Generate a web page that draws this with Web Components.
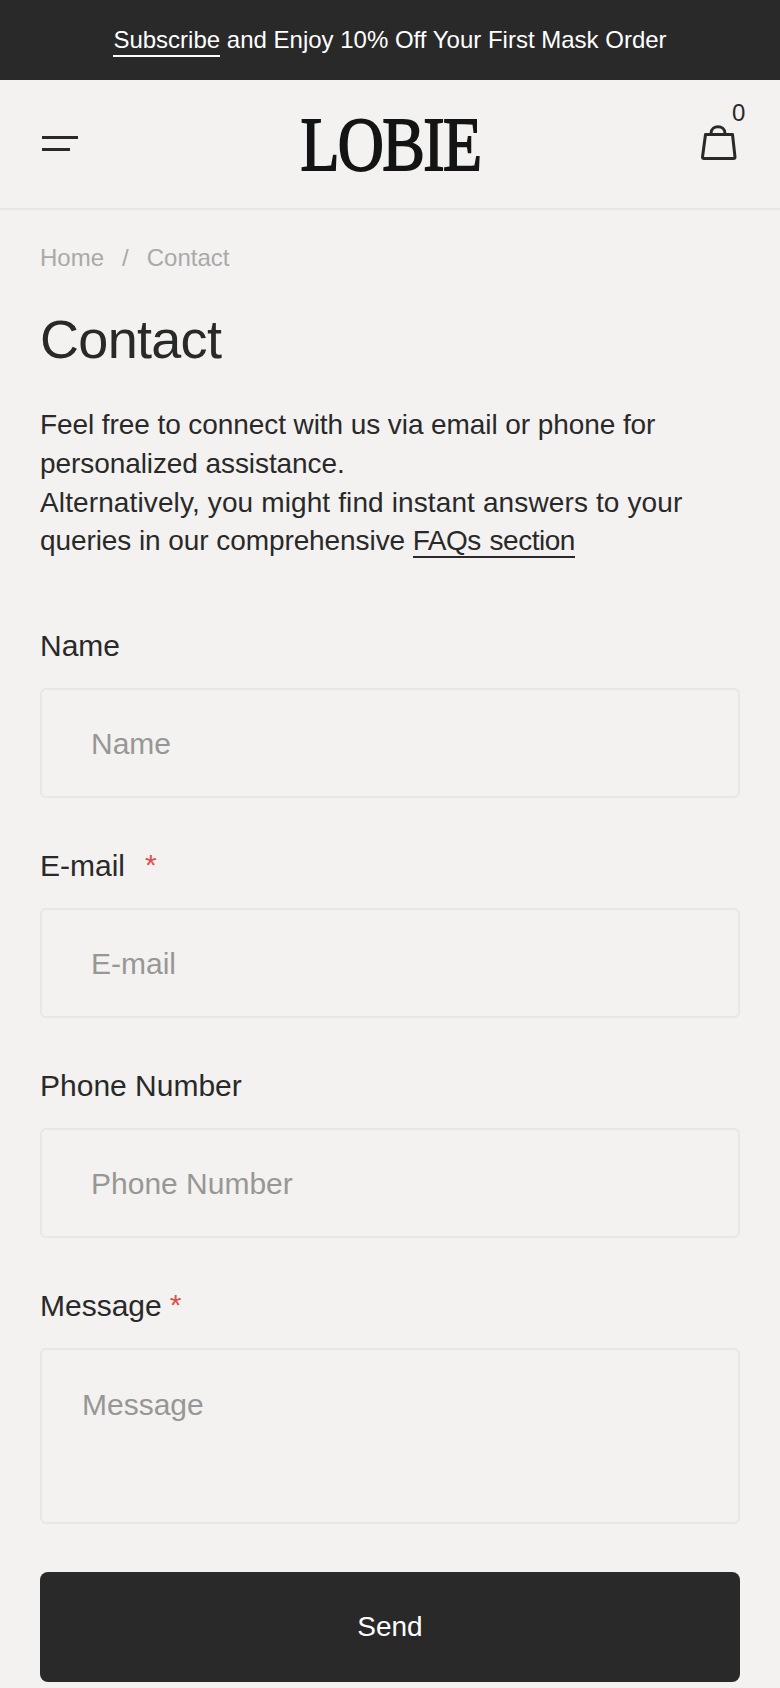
<!DOCTYPE html>
<html lang="en">
<head>
<meta charset="utf-8">
<title>Contact</title>
<style>
  html, body { margin: 0; background: #f3f2f0; }
  body { font-family: "Liberation Sans", Arial, sans-serif; color: #292929; }
</style>
</head>
<body>
<promo-bar><a href="#">Subscribe</a> and Enjoy 10% Off Your First Mask Order</promo-bar>
<site-header></site-header>
<contact-page>
  <bread-crumbs></bread-crumbs>
</contact-page>
<script>
class PromoBar extends HTMLElement {
  connectedCallback() {
    this.attachShadow({ mode: "open" }).innerHTML = `
      <style>
        :host { display:flex; height:80px; align-items:center; justify-content:center; background:#292929; color:#fff; font-size:24px; white-space:pre; padding-bottom:1px; box-sizing:border-box; }
        ::slotted(a) { color:#fff; text-decoration:none; border-bottom:2px solid #fff; padding-bottom:2px; }
      </style>
      <div><slot></slot></div>`
  }
}
customElements.define("promo-bar", PromoBar)

class SiteHeader extends HTMLElement {
  connectedCallback() {
    this.attachShadow({ mode: "open" }).innerHTML = `
      <style>
        :host { display:flex; height:130px; box-sizing:border-box; align-items:center; justify-content:space-between; padding:0 40px 0 42px; border-bottom:2px solid #e8e7e5; }
        .menu { display:flex; flex-direction:column; gap:9px; width:36px; margin-top:-2px; }
        .menu i { display:block; height:3px; background:#292929; }
        .menu i + i { width:28px; }
        .logo { font:400 77px/1 "Liberation Serif", serif; letter-spacing:-2px; color:#141414; -webkit-text-stroke:1.800px #141414; transform:scaleX(.83); margin:0 0 0 2px; }
        .bag { position:relative; width:40px; height:40px; margin-bottom:2px; }
        .bag svg { display:block; }
        .count { position:absolute; left:32px; top:-23px; font-size:24px; line-height:26px; }
      </style>
      <div class="menu"><i></i><i></i></div>
      <div class="logo">LOBIE</div>
      <div class="bag">
        <svg width="40" height="40" viewBox="0 0 40 40" fill="none" stroke="#292929" stroke-width="3" stroke-linejoin="round">
          <path d="M5.500 11.500H32.500L35 34Q35.200 35.500 33.500 35.500H4Q2.300 35.500 2.500 34Z"/>
          <path d="M11 11.500V10.500C11 1.500 25 1.500 25 10.500V11.500"/>
        </svg>
        <span class="count">0</span>
      </div>`
  }
}
customElements.define("site-header", SiteHeader)

class BreadCrumbs extends HTMLElement {
  connectedCallback() {
    this.attachShadow({ mode: "open" }).innerHTML = `
      <style>
        :host { display:flex; gap:18px; color:#a9a9a7; font-size:24px; line-height:28px; }
      </style>
      <span>Home</span><span>/</span><span>Contact</span>`
  }
}
customElements.define("bread-crumbs", BreadCrumbs)

class FormField extends HTMLElement {
  connectedCallback() {
    const label = this.getAttribute("label")
    const multi = this.hasAttribute("multiline")
    const star = this.getAttribute("star")
    this.attachShadow({ mode: "open" }).innerHTML = `
      <style>
        :host { display:block; margin-bottom:51px; }
        label { display:block; font-size:30px; line-height:34px; color:#292929; margin-bottom:25px; }
        b { font-weight:400; color:#d9534f; margin-left:${star === "wide" ? 20 : 8}px; font-size:30px; line-height:0; vertical-align:1px; }
        input, textarea { display:block; width:100%; box-sizing:border-box; margin:0; background:#f3f2f0; border:2px solid #e8e7e5; border-radius:6px; font:30px "Liberation Sans", Arial, sans-serif; color:#292929; outline:none; resize:none; }
        input { height:110px; padding:2px 49px 0; }
        textarea { height:176px; padding:38px 40px; }
        ::placeholder { color:#979795; opacity:1; }
      </style>
      <label>${label}${star ? "<b>*</b>" : ""}</label>
      ${multi ? `<textarea placeholder="${label}"></textarea>` : `<input placeholder="${label}">`}`
  }
}
customElements.define("form-field", FormField)

class SendButton extends HTMLElement {
  connectedCallback() {
    this.attachShadow({ mode: "open" }).innerHTML = `
      <style>
        :host { display:block; }
        button { display:block; width:100%; height:110px; border:0; border-radius:8px; background:#292929; color:#fff; font:28px "Liberation Sans", Arial, sans-serif; }
      </style>
      <button><slot></slot></button>`
  }
}
customElements.define("send-button", SendButton)

class ContactPage extends HTMLElement {
  connectedCallback() {
    this.attachShadow({ mode: "open" }).innerHTML = `
      <style>
        :host { display:block; padding:34px 40px 0; }
        h1 { margin:36px 0 36px; font-size:54px; line-height:62px; font-weight:400; color:#292929; letter-spacing:-.7px; }
        p { margin:0 0 69px; font-size:28px; letter-spacing:-.08px; line-height:38.500px; color:#292929; }
        p span { display:block; }
        p span + span { margin-top:1px; line-height:38px; }
        p em { font-style:normal; letter-spacing:.12px; }
        a { color:inherit; text-decoration:none; border-bottom:2px solid #292929; letter-spacing:-.5px; word-spacing:1.500px; }
        form-field[multiline] { margin-bottom:48px; }
      </style>
      <slot></slot>
      <h1>Contact</h1>
      <p><span>Feel free to connect with us via email or phone for personalized assistance.</span><span><em>Alternatively, you might find instant answers to your</em><br>queries in our comprehensive <a href="#">FAQs section</a></span></p>
      <form-field label="Name"></form-field>
      <form-field label="E-mail" star="wide"></form-field>
      <form-field label="Phone Number"></form-field>
      <form-field label="Message" star="near" multiline></form-field>
      <send-button>Send</send-button>`
  }
}
customElements.define("contact-page", ContactPage)
</script>
</body>
</html>
